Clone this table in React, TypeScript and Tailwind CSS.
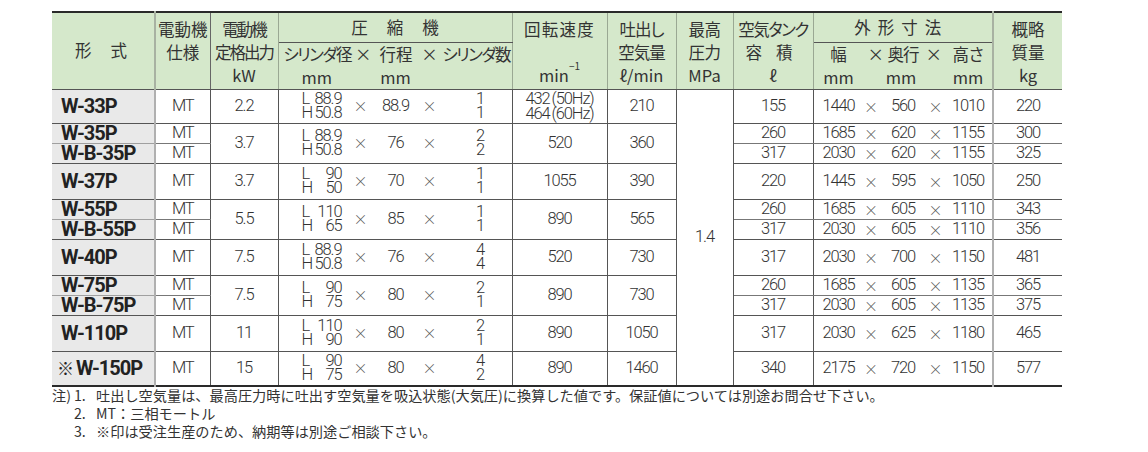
import React from "react";

const JP = "font-['Noto_Sans_CJK_JP',sans-serif]";
const NUM = "font-['Roboto','Noto_Sans_CJK_JP',sans-serif] font-light tracking-[-1.1px]";

type Item = { model: string; tank: string; dims: [string, string, string]; kg: string };
type Group = {
  kw: string;
  L: string;
  H: string;
  stroke: string;
  c: [string, string];
  speed: React.ReactNode;
  flow: string;
  items: Item[];
};

const groups: Group[] = [
  {
    kw: "2.2", L: "88.9", H: "50.8", stroke: "88.9", c: ["1", "1"],
    speed: (
      <div className="flex flex-col leading-[15px]">
        <span>432<span className="ml-[2px]">(50Hz)</span></span>
        <span>464<span className="ml-[2px]">(60Hz)</span></span>
      </div>
    ),
    flow: "210",
    items: [{ model: "W-33P", tank: "155", dims: ["1440", "560", "1010"], kg: "220" }],
  },
  {
    kw: "3.7", L: "88.9", H: "50.8", stroke: "76", c: ["2", "2"], speed: "520", flow: "360",
    items: [
      { model: "W-35P", tank: "260", dims: ["1685", "620", "1155"], kg: "300" },
      { model: "W-B-35P", tank: "317", dims: ["2030", "620", "1155"], kg: "325" },
    ],
  },
  {
    kw: "3.7", L: "90", H: "50", stroke: "70", c: ["1", "1"], speed: "1055", flow: "390",
    items: [{ model: "W-37P", tank: "220", dims: ["1445", "595", "1050"], kg: "250" }],
  },
  {
    kw: "5.5", L: "110", H: "65", stroke: "85", c: ["1", "1"], speed: "890", flow: "565",
    items: [
      { model: "W-55P", tank: "260", dims: ["1685", "605", "1110"], kg: "343" },
      { model: "W-B-55P", tank: "317", dims: ["2030", "605", "1110"], kg: "356" },
    ],
  },
  {
    kw: "7.5", L: "88.9", H: "50.8", stroke: "76", c: ["4", "4"], speed: "520", flow: "730",
    items: [{ model: "W-40P", tank: "317", dims: ["2030", "700", "1150"], kg: "481" }],
  },
  {
    kw: "7.5", L: "90", H: "75", stroke: "80", c: ["2", "1"], speed: "890", flow: "730",
    items: [
      { model: "W-75P", tank: "260", dims: ["1685", "605", "1135"], kg: "365" },
      { model: "W-B-75P", tank: "317", dims: ["2030", "605", "1135"], kg: "375" },
    ],
  },
  {
    kw: "11", L: "110", H: "90", stroke: "80", c: ["2", "1"], speed: "890", flow: "1050",
    items: [{ model: "W-110P", tank: "317", dims: ["2030", "625", "1180"], kg: "465" }],
  },
  {
    kw: "15", L: "90", H: "75", stroke: "80", c: ["4", "2"], speed: "890", flow: "1460",
    items: [{ model: "※W-150P", tank: "340", dims: ["2175", "720", "1150"], kg: "577" }],
  },
];

const singleH = [34, 36, 36, 36, 35];

const hd =
  "bg-[#d5e8cb] p-0 font-normal text-[#333] text-[16.5px] leading-[23px] whitespace-nowrap border-r border-b border-r-[#9aa893] border-b-[#555] [font-feature-settings:'palt']";
const bd = "p-0 text-center align-middle whitespace-nowrap border-r border-b border-r-[#555] border-b-[#555]";

function X() {
  return <span className={`${JP} text-[14px] font-light text-[#555] tracking-normal`}>×</span>;
}

function Compressor({ g }: { g: Group }) {
  return (
    <div className="grid grid-cols-[23px_40px_38px_32px_36px_65px] items-center">
      <div />
      <div className="flex flex-col leading-[14px]">
        <div className="flex justify-between">
          <span>L</span>
          <span>{g.L}</span>
        </div>
        <div className="flex justify-between">
          <span>H</span>
          <span>{g.H}</span>
        </div>
      </div>
      <div className="text-center">
        <X />
      </div>
      <div className="text-center">{g.stroke}</div>
      <div className="text-center">
        <X />
      </div>
      <div className="flex flex-col leading-[14px] text-center">
        <span>{g.c[0]}</span>
        <span>{g.c[1]}</span>
      </div>
    </div>
  );
}

function Dims({ d }: { d: [string, string, string] }) {
  return (
    <div className="grid grid-cols-[36px_29px_35px_30px_35px] pl-[7px] items-center">
      <span className="text-center">{d[0]}</span>
      <span className="text-center">
        <X />
      </span>
      <span className="text-center">{d[1]}</span>
      <span className="text-center">
        <X />
      </span>
      <span className="text-center">{d[2]}</span>
    </div>
  );
}

export default function App() {
  let singleIdx = 0;
  let first = true;
  const rows: React.ReactNode[] = [];
  groups.forEach((g, gi) => {
    const n = g.items.length;
    const h = n === 2 ? 19 : singleH[singleIdx++] ?? 36;
    g.items.forEach((it, i) => {
      const lastInGroup = i === n - 1;
      const subLine = lastInGroup ? "border-b-[#555]" : "border-b-[#777]";
      const lh = n === 2 ? "leading-[18px]" : "leading-[20px]";
      rows.push(
        <tr key={`${gi}-${i}`} style={{ height: h }}>
          <td
            className={`p-0 bg-[#e9e9e9] whitespace-nowrap border-b border-r-2 border-r-[#b0b0b0] ${lastInGroup ? "border-b-[#555]" : "border-b-[#a0a0a0]"} pl-[9px] text-left align-middle font-['Roboto',sans-serif] font-bold text-[20px] tracking-[-1px] ${lh} text-[#222]`}
          >
            {it.model.startsWith("※") ? (
              <span className="-ml-[4px]">
                <span className={`${JP} font-normal text-[17px] mr-[2px] tracking-normal`}>※</span>
                {it.model.slice(1)}
              </span>
            ) : (
              it.model
            )}
          </td>
          <td className={`${bd} ${subLine} ${lh}`}>MT</td>
          {i === 0 && (
            <>
              <td className={bd} rowSpan={n}>
                {g.kw}
              </td>
              <td className={bd} rowSpan={n}>
                <Compressor g={g} />
              </td>
              <td className={bd} rowSpan={n}>
                {g.speed}
              </td>
              <td className={bd} rowSpan={n}>
                {g.flow}
              </td>
            </>
          )}
          {first && (
            <td className={`${bd} border-b-0`} rowSpan={11}>
              1.4
            </td>
          )}
          <td className={`${bd} ${subLine} ${lh}`}>{it.tank}</td>
          <td className={`${bd} ${subLine} border-r-2 border-r-[#b0b0b0] ${lh}`}>
            <Dims d={it.dims} />
          </td>
          <td className={`p-0 text-center align-middle border-b ${subLine} ${lh}`}>{it.kg}</td>
        </tr>
      );
      first = false;
    });
  });

  return (
    <div className="w-[1148px] h-[452px] bg-white pl-[52px] pt-[11px] overflow-hidden">
      <table
        className={`border-collapse table-fixed w-[1010px] border-t-2 border-b-2 border-t-[#2a2a2a] border-b-[#2a2a2a] ${NUM} text-[16.5px] text-[#333]`}
      >
        <colgroup>
          <col className="w-[103px]" />
          <col className="w-[55px]" />
          <col className="w-[68px]" />
          <col className="w-[234px]" />
          <col className="w-[95px]" />
          <col className="w-[69px]" />
          <col className="w-[57px]" />
          <col className="w-[80px]" />
          <col className="w-[180px]" />
          <col className="w-[69px]" />
        </colgroup>
        <thead className={`${JP} tracking-normal`}>
          <tr className="h-[30px]">
            <th rowSpan={2} className={`${hd} border-r-2 border-r-[#a8b2a2] align-middle`}>
              <div className="flex justify-center gap-[19px] pr-[4px]">
                <span>形</span>
                <span>式</span>
              </div>
            </th>
            <th rowSpan={2} className={`${hd} border-r-[#666] align-top`}>
              <div className="flex flex-col items-center pt-[5px]">
                <span>電動機</span>
                <span>仕様</span>
              </div>
            </th>
            <th rowSpan={2} className={`${hd} align-top`}>
              <div className="flex flex-col items-center pt-[5px] tracking-[-2px]">
                <span>電動機</span>
                <span>定格出力</span>
                <span className="tracking-normal">kW</span>
              </div>
            </th>
            <th className={`${hd} border-b-[#9aa893] align-middle`}>
              <div className="flex justify-center gap-[19px]">
                <span>圧</span>
                <span>縮</span>
                <span>機</span>
              </div>
            </th>
            <th rowSpan={2} className={`${hd} align-top`}>
              <div className="flex flex-col items-center pt-[5px] tracking-[1.2px]">
                <span>回転速度</span>
                <span>&nbsp;</span>
                <span className="tracking-normal">
                  min<sup className="text-[10px] align-[7px]">−1</sup>
                </span>
              </div>
            </th>
            <th rowSpan={2} className={`${hd} align-top`}>
              <div className="flex flex-col items-center pt-[5px] tracking-[-1px]">
                <span>吐出し</span>
                <span>空気量</span>
                <span className="tracking-normal">ℓ/min</span>
              </div>
            </th>
            <th rowSpan={2} className={`${hd} align-top`}>
              <div className="flex flex-col items-center pt-[5px] tracking-[-0.5px]">
                <span>最高</span>
                <span>圧力</span>
                <span className="tracking-normal">MPa</span>
              </div>
            </th>
            <th rowSpan={2} className={`${hd} align-top`}>
              <div className="flex flex-col items-center pt-[5px]">
                <span className="tracking-[-1.5px]">空気タンク</span>
                <span className="flex gap-[14px] pr-[8px]">
                  <span>容</span>
                  <span>積</span>
                </span>
                <span>ℓ</span>
              </div>
            </th>
            <th className={`${hd} border-r-2 border-r-[#a8b2a2] border-b-[#9aa893] align-middle`}>
              <div className="flex justify-center gap-[7px] pr-[10px]">
                <span>外</span>
                <span>形</span>
                <span>寸</span>
                <span>法</span>
              </div>
            </th>
            <th rowSpan={2} className={`${hd} border-r-0 align-top`}>
              <div className="flex flex-col items-center pt-[5px]">
                <span>概略</span>
                <span>質量</span>
                <span>kg</span>
              </div>
            </th>
          </tr>
          <tr className="h-[44px]">
            <th className={`${hd} align-top`}>
              <div className="grid grid-cols-[23px_40px_38px_32px_36px_65px]">
                <span className="col-span-3 flex gap-[4px] pl-[5px]">
                  <span className="tracking-[-1.5px]">シリンダ径</span>
                  <span>×</span>
                </span>
                <span className="text-center">行程</span>
                <span className="text-center">×</span>
                <span className="text-left -ml-[5px] tracking-[-1.5px]">シリンダ数</span>
                <span />
                <span className="text-left">mm</span>
                <span />
                <span className="text-center">mm</span>
                <span />
                <span />
              </div>
            </th>
            <th className={`${hd} border-r-2 border-r-[#a8b2a2] align-top`}>
              <div className="grid grid-cols-[36px_29px_35px_30px_35px] pl-[7px]">
                <span className="text-center">幅</span>
                <span className="text-left pl-[11px]">×</span>
                <span className="text-left ml-[2px] tracking-[-1px]">奥行</span>
                <span className="text-left pl-[5px]">×</span>
                <span className="text-center">高さ</span>
                <span className="text-center">mm</span>
                <span />
                <span className="text-center -ml-[4px]">mm</span>
                <span />
                <span className="text-center">mm</span>
              </div>
            </th>
          </tr>
        </thead>
        <tbody>{rows}</tbody>
      </table>
      <div className={`${JP} text-[14.2px] leading-[18px] text-[#333] -mt-[1px]`}>
        <div className="flex">
          <span className="w-[22px]">注)</span>
          <span className="w-[22px]">1.</span>
          <span>吐出し空気量は、最高圧力時に吐出す空気量を吸込状態(大気圧)に換算した値です。保証値については別途お問合せ下さい。</span>
        </div>
        <div className="flex">
          <span className="w-[22px]" />
          <span className="w-[22px]">2.</span>
          <span>MT：三相モートル</span>
        </div>
        <div className="flex">
          <span className="w-[22px]" />
          <span className="w-[22px]">3.</span>
          <span>※印は受注生産のため、納期等は別途ご相談下さい。</span>
        </div>
      </div>
    </div>
  );
}
